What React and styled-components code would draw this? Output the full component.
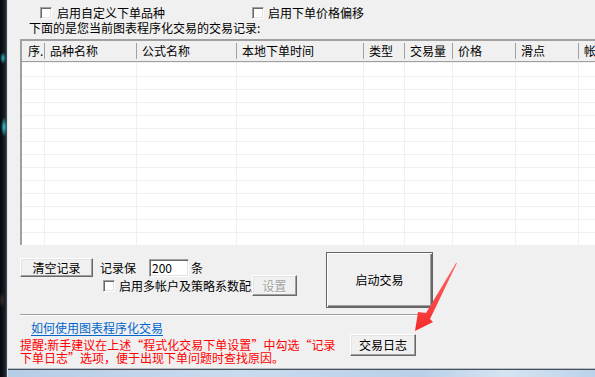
import React from 'react';
import styled, { createGlobalStyle } from 'styled-components';

const GlobalStyle = createGlobalStyle`
  html, body {
    margin: 0;
    padding: 0;
    background: #f0f0f0;
    overflow: hidden;
  }
  body {
    font-family: "Noto Sans CJK SC", "Noto Sans", sans-serif;
    font-size: 12px;
    color: #000;
  }
  #root {
    width: 595px;
    height: 377px;
  }
`;

const Page = styled.div`
  position: relative;
  display: flex;
  width: 595px;
  height: 377px;
  overflow: hidden;
`;

const DesktopStrip = styled.div`
  width: 7px;
  flex-shrink: 0;
  background:
    radial-gradient(ellipse 3px 6px at 3px 58px, #2fb7c8, transparent),
    radial-gradient(ellipse 3px 10px at 4px 127px, #39c6d6, transparent),
    radial-gradient(ellipse 3px 8px at 2px 300px, #3a3028, transparent),
    linear-gradient(to right, #05080b 0, #141a20 4px, #2a3038 6px, #5b636c 7px);
`;

const Window = styled.div`
  flex: 1;
  display: flex;
  flex-direction: column;
  border-left: 1px solid #dce6f0;
  background: #f0f0f0;
  overflow: hidden;
`;

const Content = styled.div`
  flex: 1;
  display: flex;
  flex-direction: column;
  border-bottom: 1px solid #b8bec6;
`;

const TopOptions = styled.div`
  display: flex;
  margin-top: 6px;
  padding-left: 32px;
  height: 13px;
`;

const Option = styled.label`
  display: flex;
  align-items: center;
  width: ${props => props.$width ? `${props.$width}px` : 'auto'};
  line-height: 12px;
  white-space: nowrap;
`;

const CheckBox = styled.span`
  box-sizing: border-box;
  display: inline-block;
  flex-shrink: 0;
  width: 12px;
  height: 12px;
  margin-right: ${props => props.$gap || 5}px;
  background: #fff;
  border: 1px solid;
  border-color: #a0a0a0 #fff #fff #a0a0a0;
  box-shadow: inset 1px 1px #696969, inset -1px -1px #e3e3e3;
`;

const Caption = styled.div`
  margin: 3px 0 0 21px;
  line-height: 12px;
  white-space: nowrap;
`;

const ListBox = styled.div`
  display: flex;
  flex-direction: column;
  margin: 5px 0 0 12px;
  width: 700px;
  height: 204px;
  flex-shrink: 0;
  border-top: 2px solid #a0a0a0;
  border-left: 2px solid #a0a0a0;
  background: #fff;
  overflow: hidden;
`;

const columns = '23px 92px 100px 127px 41px 48px 63px 63px 120px';

const HeaderRow = styled.div`
  display: grid;
  grid-template-columns: ${columns};
  height: 20px;
  flex-shrink: 0;
  background: #f0f0f0;
  border-bottom: 1px solid #a0a0a0;
`;

const HeaderCell = styled.div`
  padding-left: ${props => props.$pad || 5}px;
  line-height: 20px;
  white-space: nowrap;
  overflow: hidden;
  background: linear-gradient(#a0a0a0, #a0a0a0) right 2px / 1px 16px no-repeat;
`;

const Body = styled.div`
  flex: 1;
  display: grid;
  grid-template-columns: ${columns};
  background: repeating-linear-gradient(to bottom, #fff 0 12px, #f0f0f0 12px 13px);
  background-position: 0 2px;
`;

const BodyColumn = styled.div`
  border-right: 1px solid #f0f0f0;
`;

const BottomControls = styled.div`
  display: flex;
  align-items: flex-start;
  padding-left: 12px;
`;

const LeftControls = styled.div`
  width: 306px;
  padding-top: 13px;
  display: flex;
  flex-direction: column;
`;

const ControlRow = styled.div`
  display: flex;
  align-items: center;
  height: ${props => props.$height}px;
  margin-top: ${props => props.$top || 0}px;
  padding-left: ${props => props.$indent || 0}px;
`;

const Button = styled.button`
  box-sizing: border-box;
  flex-shrink: 0;
  width: ${props => props.$w}px;
  height: ${props => props.$h}px;
  margin: ${props => props.$margin || 0};
  padding: 0;
  font: inherit;
  font-size: 12px;
  line-height: 12px;
  color: ${props => props.disabled ? '#a0a0a0' : '#000'};
  text-shadow: ${props => props.disabled ? '1px 1px #fff' : 'none'};
  background: #f0f0f0;
  border: 1px solid;
  border-color: #fff #696969 #696969 #fff;
  box-shadow: inset -1px -1px #a0a0a0, inset 1px 1px #e3e3e3;
  white-space: nowrap;
`;

const DefaultButton = styled(Button)`
  border: 1px solid #646464;
  box-shadow: inset 1px 1px #fff, inset -1px -1px #696969, inset -2px -2px #a0a0a0;
`;

const Label = styled.span`
  margin-left: ${props => props.$left || 0}px;
  line-height: 14px;
  white-space: nowrap;
  flex-shrink: 0;
`;

const ClippedLabel = styled(Label)`
  width: ${props => props.$width}px;
  overflow: hidden;
  text-overflow: clip;
`;

const NumberInput = styled.div`
  box-sizing: border-box;
  width: 40px;
  height: 18px;
  margin-left: 13px;
  padding-left: 2px;
  line-height: 16px;
  background: #fff;
  border: 1px solid;
  border-color: #a0a0a0 #fff #fff #a0a0a0;
  box-shadow: inset 1px 1px #696969, inset -1px -1px #e3e3e3;
`;

const Separator = styled.div`
  margin: 6px 0 0 12px;
  width: 400px;
  height: 0;
  border-top: 1px solid #a0a0a0;
  border-bottom: 1px solid #fff;
`;

const Footer = styled.div`
  display: flex;
  align-items: flex-start;
  padding-left: 12px;
`;

const FooterText = styled.div`
  width: 330px;
  display: flex;
  flex-direction: column;
  align-items: flex-start;
`;

const HelpLink = styled.a`
  margin: 6px 0 0 11px;
  line-height: 12px;
  color: #0066cc;
  text-decoration: underline;
  text-underline-offset: 2px;
  white-space: nowrap;
  cursor: pointer;
`;

const Notice = styled.div`
  margin-top: 5px;
  line-height: 12.5px;
  color: #ff0000;
  white-space: nowrap;
`;

const Quote = styled.span`
  font-feature-settings: "fwid";
`;

const Frame = styled.div`
  height: 7px;
  flex-shrink: 0;
  border-top: 1px solid #46505c;
  background: linear-gradient(to right, #b6cde6, #c9dbee 40%, #b9d0e8 70%, #d6e4f2 85%, #bcd2ea);
`;

const Arrow = styled.svg`
  position: absolute;
  left: 400px;
  top: 255px;
  width: 70px;
  height: 85px;
  pointer-events: none;
`;

const headers = ['序.', '品种名称', '公式名称', '本地下单时间', '类型', '交易量', '价格', '滑点', '帐号'];

export default function App() {
  return (
    <>
      <GlobalStyle />
      <Page>
        <DesktopStrip />
        <Window>
          <Content>
            <TopOptions>
              <Option $width={212}>
                <CheckBox />启用自定义下单品种
              </Option>
              <Option>
                <CheckBox $gap={4} />启用下单价格偏移
              </Option>
            </TopOptions>
            <Caption>下面的是您当前图表程序化交易的交易记录:</Caption>
            <ListBox>
              <HeaderRow>
                {headers.map((h, i) => (
                  <HeaderCell key={h} $pad={i === 0 ? 6 : 5}>{h}</HeaderCell>
                ))}
              </HeaderRow>
              <Body>
                {headers.map(h => <BodyColumn key={h} />)}
              </Body>
            </ListBox>
            <BottomControls>
              <LeftControls>
                <ControlRow $height={19}>
                  <Button $w={73} $h={19}>清空记录</Button>
                  <Label $left={7}>记录保</Label>
                  <NumberInput>200</NumberInput>
                  <Label $left={2}>条</Label>
                </ControlRow>
                <ControlRow $height={21} $top={-2} $indent={83}>
                  <CheckBox $gap={4} />
                  <ClippedLabel $width={133}>启用多帐户及策略系数配置</ClippedLabel>
                  <Button $w={45} $h={21} disabled>设置</Button>
                </ControlRow>
              </LeftControls>
              <DefaultButton $w={107} $h={56} $margin="7px 0 0 0">启动交易</DefaultButton>
            </BottomControls>
            <Separator />
            <Footer>
              <FooterText>
                <HelpLink>如何使用图表程序化交易</HelpLink>
                <Notice>
                  提醒:新手建议在上述<Quote>“</Quote>程式化交易下单设置<Quote>”</Quote>中勾选<Quote>“</Quote>记录
                  <br />
                  下单日志<Quote>”</Quote>选项，便于出现下单问题时查找原因。
                </Notice>
              </FooterText>
              <Button $w={66} $h={22} $margin="18px 0 0 0">交易日志</Button>
            </Footer>
          </Content>
          <Frame />
        </Window>
        <Arrow viewBox="0 0 70 85">
          <defs>
            <linearGradient id="arrowFill" x1="0" y1="0" x2="0" y2="1">
              <stop offset="0" stopColor="#ff6a6a" />
              <stop offset="1" stopColor="#f42a2a" />
            </linearGradient>
          </defs>
          <polygon
            points="57,8 30,64 33,67 15,76 18,57 26,58 56,8"
            fill="url(#arrowFill)"
          />
        </Arrow>
      </Page>
    </>
  );
}
